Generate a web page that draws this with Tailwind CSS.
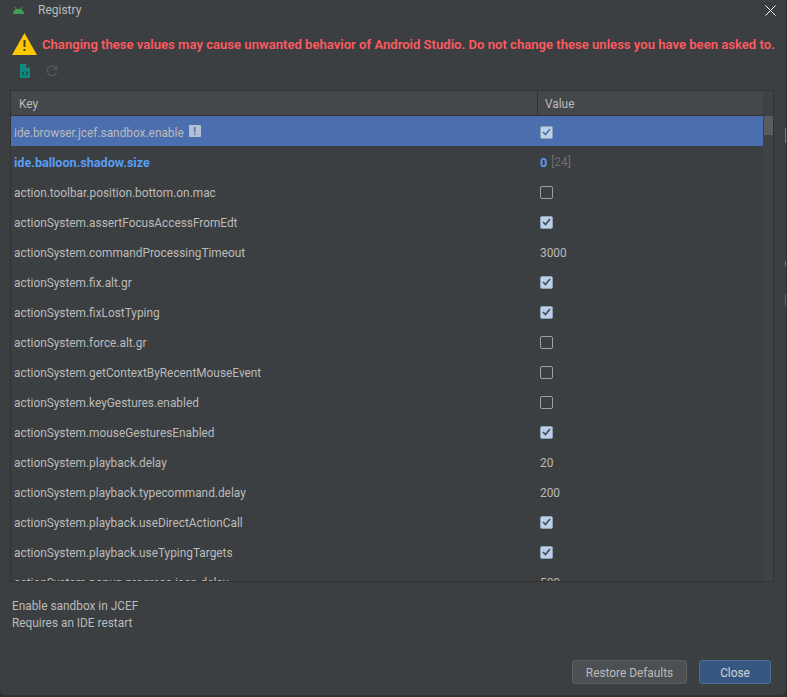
<!doctype html>
<html lang="en">
    <head>
        <meta charset="UTF-8" />
        <title>Registry</title>
        <script src="https://cdn.jsdelivr.net/npm/@tailwindcss/browser@4"></script>
    </head>
    <body class="bg-[#2f3132] w-[787px] h-[697px] overflow-hidden font-['Roboto',sans-serif] text-[11.850px] text-[#bbbbbb]">
        <div class="relative flex flex-col w-[786px] h-[695px] bg-[#3c3f41] rounded-b-[6px]">
            <!-- title bar -->
            <div class="flex items-center h-[20px] pl-[13px] pr-[10px] shrink-0">
                <svg class="w-[11px] h-[7px] shrink-0" viewBox="0 0 11 7" fill="#3f9e55">
                    <path d="M0 7C0 4 2 2 5.500 2S11 4 11 7z" />
                    <path d="M2 0l1.500 3M9 0L7.500 3" stroke="#3f9e55" />
                </svg>
                <span class="ml-[14px] text-[12px]">Registry</span>
                <svg class="ml-auto w-[11px] h-[11px] shrink-0" viewBox="0 0 11 11" stroke="#ffffff" fill="none">
                    <path d="M0.500 0.500l10 10M10.500 0.500l-10 10" />
                </svg>
            </div>

            <!-- warning -->
            <div class="flex items-center h-[24px] mt-[12px] pl-[12px] shrink-0">
                <svg class="w-[25px] h-[22px] shrink-0" viewBox="0 0 25 22">
                    <path d="M12.500 0L25 22H0z" fill="#ffc800" />
                    <path d="M11.500 7h2v7h-2zM11.500 16h2v2h-2z" fill="#3c3f41" />
                </svg>
                <span class="ml-[5px] pt-[2px] font-semibold text-[13.100px] whitespace-nowrap text-[#ff5a60]">Changing these values may cause unwanted behavior of Android Studio. Do not change these unless you have been asked to.</span>
            </div>

            <!-- toolbar -->
            <div class="flex items-center h-[22px] mt-[4px] pl-[19px] gap-[15px] shrink-0">
                <svg class="w-[12px] h-[14px] shrink-0" viewBox="0 0 12 14">
                    <path d="M1 0h6l4 4v10H1z" fill="#0f8a7e" />
                    <path d="M7 0v4h4" fill="#3c3f41" />
                    <path d="M5 7.500L3.500 9.500l1.500 2M7 7.500l1.500 2-1.500 2" fill="none" stroke="#1f2a2c" />
                </svg>
                <svg class="w-[12px] h-[12px] shrink-0" viewBox="0 0 12 12" fill="none" stroke="#55585a" stroke-width="1.500">
                    <path d="M10.500 7.500A4.700 4.700 0 1 1 9.500 2.500" />
                    <path d="M10.500 0.500V4H7" />
                </svg>
            </div>

            <!-- table -->
            <div class="mx-[10px] mt-[8px] w-[764px] h-[492px] border border-[#323232] flex overflow-hidden shrink-0">
                <div class="w-[752px] shrink-0">
                    <div class="flex h-[25px] bg-[#45484a] border-b border-[#323232]">
                        <div class="w-[527px] pl-[8px] pt-[4px] flex items-center border-r border-[#323232]">Key</div>
                        <div class="pl-[7px] pt-[4px] flex items-center">Value</div>
                    </div>
                    <div id="rows"></div>
                </div>
                <div class="w-[11px] bg-[#3f4244] pt-[25px]">
                    <div class="w-[9px] h-[19px] mx-auto bg-[#5a5d5f]"></div>
                </div>
            </div>

            <!-- description -->
            <div class="pl-[12px] mt-[16px] leading-[17px] shrink-0">
                <p>Enable sandbox in JCEF</p>
                <p>Requires an IDE restart</p>
            </div>

            <!-- buttons -->
            <div class="mt-auto mb-[11px] pr-[15px] flex justify-end gap-[12px]">
                <button class="w-[115px] h-[24px] pt-[3px] rounded-[3px] border border-[#5e6060] bg-[#4c5052]">Restore Defaults</button>
                <button class="w-[72px] h-[24px] pt-[3px] rounded-[3px] border border-[#4c708c] bg-[#365880] text-[#d0d4d8]">Close</button>
            </div>

            <!-- window behind, showing past the dialog edge -->
            <div class="absolute left-[785px] top-[128px] w-[1px] h-[15px] bg-[#8a7b50]"></div>
            <div class="absolute left-[785px] top-[261px] w-[1px] h-[5px] bg-[#77797b]"></div>
            <div class="absolute left-[785px] top-[294px] w-[1px] h-[11px] bg-[#4f6aa0]"></div>
        </div>

        <script>
            const rows = [
                ['ide.browser.jcef.sandbox.enable', true, 'selected'],
                ['ide.balloon.shadow.size', '0', 'changed'],
                ['action.toolbar.position.bottom.on.mac', false],
                ['actionSystem.assertFocusAccessFromEdt', true],
                ['actionSystem.commandProcessingTimeout', '3000'],
                ['actionSystem.fix.alt.gr', true],
                ['actionSystem.fixLostTyping', true],
                ['actionSystem.force.alt.gr', false],
                ['actionSystem.getContextByRecentMouseEvent', false],
                ['actionSystem.keyGestures.enabled', false],
                ['actionSystem.mouseGesturesEnabled', true],
                ['actionSystem.playback.delay', '20'],
                ['actionSystem.playback.typecommand.delay', '200'],
                ['actionSystem.playback.useDirectActionCall', true],
                ['actionSystem.playback.useTypingTargets', true],
                ['actionSystem.popup.progress.icon.delay', '500'],
            ];

            const checked = (stroke) => `<span class="mt-[2px] w-[13px] h-[13px] rounded-[2px] bg-[#bcd0e8] border border-[#8fa3b8] flex items-center justify-center"><svg class="w-[9px] h-[8px]" viewBox="0 0 9 8" fill="none" stroke="${stroke}" stroke-width="1.600"><path d="M1 4l2.500 2.500L8 1" /></svg></span>`;
            const unchecked = `<span class="mt-[2px] w-[13px] h-[13px] rounded-[2px] border border-[#a0a0a0]"></span>`;

            document.getElementById('rows').innerHTML = rows
                .map(([key, value, state]) => {
                    const selected = state === 'selected';
                    const changed = state === 'changed';
                    let cell = `<span class="pt-[6px] text-[#bbbbbb]">${value}</span>`;
                    if (value === true) cell = checked(selected ? '#4b6eaf' : '#3d4a5a');
                    if (value === false) cell = unchecked;
                    if (changed) cell = `<span class="pt-[4px] font-bold text-[12.600px] text-[#589df6]">${value}</span><span class="pt-[4px] ml-[4px] text-[#6e6e6e]">[24]</span>`;
                    const badge = selected
                        ? `<span class="ml-[5px] w-[12px] h-[12px] rounded-[1px] bg-[#b3c1d4] text-[#4b6eaf] text-[10px] font-bold flex items-center justify-center">!</span>`
                        : '';
                    return `<div class="flex h-[30px] ${selected ? 'bg-[#4b6eaf]' : ''}">
                        <div class="w-[527px] pl-[3px] flex items-center ${changed ? 'font-bold text-[12.600px] text-[#589df6]' : ''}"><span class="${changed ? 'pt-[4px]' : 'pt-[6px]'} whitespace-nowrap">${key}</span>${badge}</div>
                        <div class="pl-[2px] flex items-center">${cell}</div>
                    </div>`;
                })
                .join('');
        </script>
    </body>
</html>
